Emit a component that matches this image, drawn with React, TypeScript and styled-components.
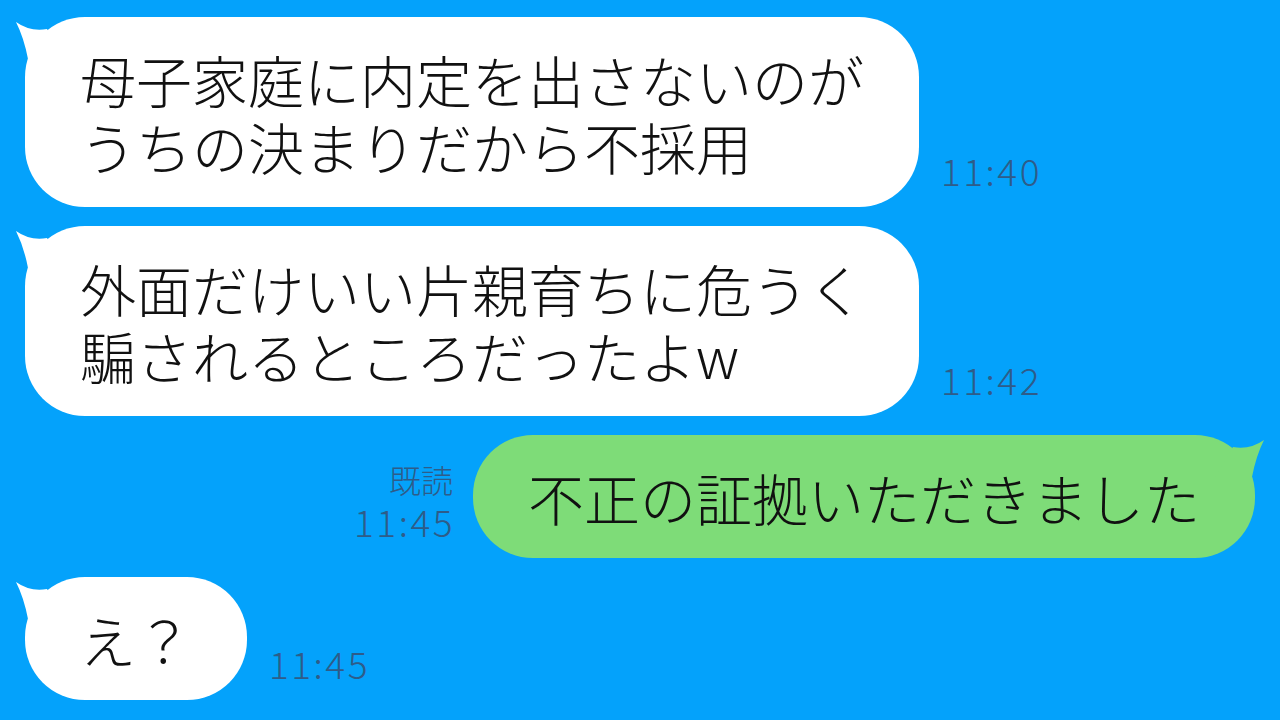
import styled, { createGlobalStyle } from 'styled-components';

type Side = 'left' | 'right';

const messages: { side: Side; lines: string[]; time: string; read?: boolean }[] = [
  { side: 'left', lines: ['母子家庭に内定を出さないのが', 'うちの決まりだから不採用'], time: '11:40' },
  { side: 'left', lines: ['外面だけいい片親育ちに危うく', '騙されるところだったよw'], time: '11:42' },
  { side: 'right', lines: ['不正の証拠いただきました'], time: '11:45', read: true },
  { side: 'left', lines: ['え？'], time: '11:45' },
];

function Tail(props: { side: Side }) {
  return (
    <TailSvg $side={props.side} width="50" height="50" viewBox="-10 0 50 50">
      <path d="M -9 5 Q 5 15 22 12 L 40 42 L 3 42 Q -1 21 -9 5 Z" />
    </TailSvg>
  );
}

export default function App() {
  return (
    <>
      <GlobalStyle />
      <Page>
        {messages.map((m, i) => (
          <Row key={i} $side={m.side}>
            {m.side === 'right' && (
              <Meta $side="right">
                {m.read && <Read>既読</Read>}
                <Time>{m.time}</Time>
              </Meta>
            )}
            <Bubble $side={m.side}>
              <Tail side={m.side} />
              {m.lines.map((l, j) => (
                <Line key={j}>{l}</Line>
              ))}
            </Bubble>
            {m.side === 'left' && (
              <Meta $side="left">
                <Time>{m.time}</Time>
              </Meta>
            )}
          </Row>
        ))}
      </Page>
    </>
  );
}

const GlobalStyle = createGlobalStyle`
  html, body {
    margin: 0;
    padding: 0;
    background: #04a2fb;
  }
  body {
    font-family: "Noto Sans CJK JP", "Noto Sans", sans-serif;
    font-weight: 300;
  }
`;

const Page = styled.main`
  width: 1280px;
  height: 720px;
  box-sizing: border-box;
  padding: 17px 25px 0;
  display: flex;
  flex-direction: column;
  gap: 19px;
  background: #04a2fb;
  overflow: hidden;
`;

const Row = styled.div<{ $side: Side }>`
  display: flex;
  align-items: flex-end;
  justify-content: ${(p) => (p.$side === 'right' ? 'flex-end' : 'flex-start')};
  gap: ${(p) => (p.$side === 'right' ? '20px' : '22px')};
`;

const Bubble = styled.div<{ $side: Side }>`
  position: relative;
  padding: 28px 55px;
  border-radius: 60px;
  background: ${(p) => (p.$side === 'right' ? '#7edc78' : '#ffffff')};
  color: #111;
  font-size: 56px;
  line-height: 67px;
  white-space: nowrap;
`;

const TailSvg = styled.svg<{ $side: Side }>`
  position: absolute;
  top: 0;
  ${(p) => (p.$side === 'right' ? 'right: -10px; transform: scaleX(-1);' : 'left: -10px;')}
  fill: ${(p) => (p.$side === 'right' ? '#7edc78' : '#ffffff')};
  overflow: visible;
`;

const Line = styled.div``;

const Meta = styled.div<{ $side: Side }>`
  display: flex;
  flex-direction: column;
  align-items: ${(p) => (p.$side === 'right' ? 'flex-end' : 'flex-start')};
  padding-bottom: 16px;
  color: #2e5c89;
`;

const Read = styled.div`
  font-size: 32px;
  line-height: 42px;
`;

const Time = styled.div`
  font-size: 37px;
  line-height: 42px;
  letter-spacing: 2.5px;
  margin-right: -2px;
`;
